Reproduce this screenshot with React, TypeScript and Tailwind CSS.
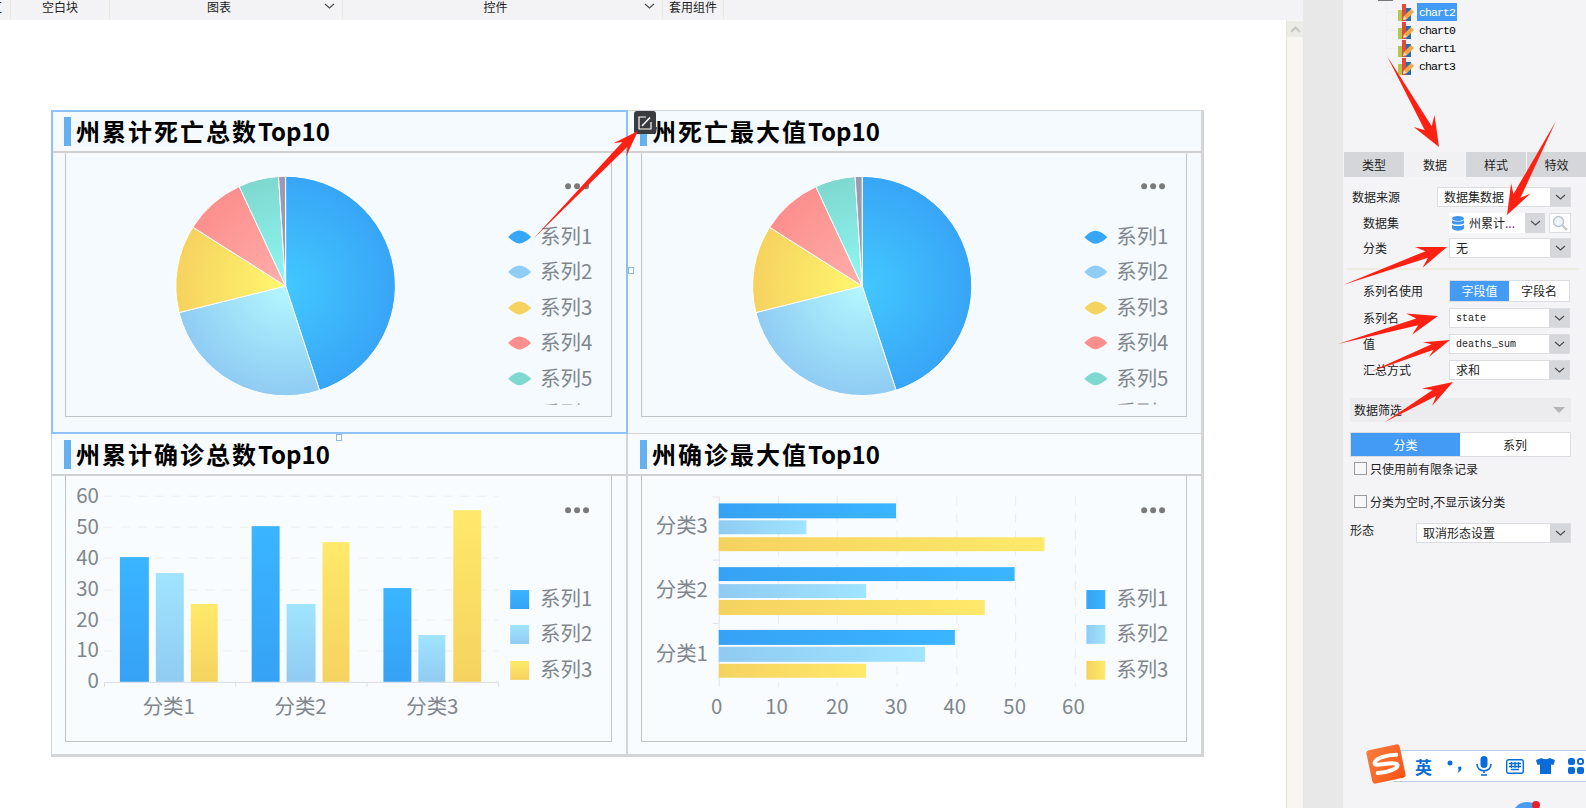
const legendItems = ["系列1", "系列2", "系列3", "系列4", "系列5", "系列6"];
const legendFills = ["#38a6f7", "#8fcdf4", "#f6d25f", "#fc8f8d", "#7ed8d0", "#9a9ab5"];

function Defs() {
  return (
    <defs>
      <radialGradient id="r1" gradientUnits="userSpaceOnUse" cx="286" cy="286" r="110">
        <stop offset="0" stopColor="#42c8ff" />
        <stop offset="1" stopColor="#38a5f6" />
      </radialGradient>
      <radialGradient id="r2" gradientUnits="userSpaceOnUse" cx="286" cy="286" r="110">
        <stop offset="0" stopColor="#b4f8ff" />
        <stop offset="1" stopColor="#8fcbf3" />
      </radialGradient>
      <radialGradient id="r3" gradientUnits="userSpaceOnUse" cx="286" cy="286" r="110">
        <stop offset="0" stopColor="#fff76e" />
        <stop offset="1" stopColor="#f6d25f" />
      </radialGradient>
      <radialGradient id="r4" gradientUnits="userSpaceOnUse" cx="286" cy="286" r="110">
        <stop offset="0" stopColor="#ffaeab" />
        <stop offset="1" stopColor="#fc8f8d" />
      </radialGradient>
      <radialGradient id="r5" gradientUnits="userSpaceOnUse" cx="286" cy="286" r="110">
        <stop offset="0" stopColor="#90f7f3" />
        <stop offset="1" stopColor="#7ed8d0" />
      </radialGradient>
      <linearGradient id="v1" x1="0" y1="0" x2="0" y2="1">
        <stop offset="0" stopColor="#3ab5ff" />
        <stop offset="1" stopColor="#36a2f5" />
      </linearGradient>
      <linearGradient id="v2" x1="0" y1="0" x2="0" y2="1">
        <stop offset="0" stopColor="#a0e4ff" />
        <stop offset="1" stopColor="#90cbf2" />
      </linearGradient>
      <linearGradient id="v3" x1="0" y1="0" x2="0" y2="1">
        <stop offset="0" stopColor="#ffe96a" />
        <stop offset="1" stopColor="#f5d25f" />
      </linearGradient>
      <linearGradient id="h1" x1="0" y1="0" x2="1" y2="0">
        <stop offset="0" stopColor="#36a2f5" />
        <stop offset="1" stopColor="#3ab5ff" />
      </linearGradient>
      <linearGradient id="h2" x1="0" y1="0" x2="1" y2="0">
        <stop offset="0" stopColor="#90cbf2" />
        <stop offset="1" stopColor="#a0e4ff" />
      </linearGradient>
      <linearGradient id="h3" x1="0" y1="0" x2="1" y2="0">
        <stop offset="0" stopColor="#f5d25f" />
        <stop offset="1" stopColor="#ffe96a" />
      </linearGradient>
      <clipPath id="legendClip">
        <rect x="500" y="215" width="110" height="190" />
      </clipPath>
    </defs>
  );
}

function Dots({ x, y }: { x: number; y: number }) {
  return (
    <g fill="#7a7a7a">
      <circle cx={x} cy={y} r="3" />
      <circle cx={x + 9} cy={y} r="3" />
      <circle cx={x + 18} cy={y} r="3" />
    </g>
  );
}

function Label({ x, y, anchor, children }: { x: number; y: number; anchor?: "middle" | "end"; children: string }) {
  return (
    <text x={x} y={y + 7} textAnchor={anchor} fontSize="20.5" fill="#7f868d">
      {children}
    </text>
  );
}

function slice(from: number, to: number) {
  const cx = 286;
  const cy = 286;
  const r = 110;
  const a = (from * Math.PI) / 180;
  const b = (to * Math.PI) / 180;
  const large = to - from > 180 ? 1 : 0;
  return `M${cx} ${cy}L${cx + r * Math.sin(a)} ${cy - r * Math.cos(a)}A${r} ${r} 0 ${large} 1 ${cx + r * Math.sin(b)} ${cy - r * Math.cos(b)}Z`;
}

function PieChart({ viewBox }: { viewBox: string }) {
  const slices = [
    [0, 162, "url(#r1)"],
    [162, 256, "url(#r2)"],
    [256, 302.4, "url(#r3)"],
    [302.4, 335, "url(#r4)"],
    [335, 356.3, "url(#r5)"],
    [356.3, 360, "#9a9ab5"],
  ] as const;
  const rows = [237, 272, 308, 343, 379, 414];
  return (
    <svg viewBox={viewBox} className="h-full w-full">
      <Defs />
      {slices.map((s, i) => (
        <path key={i} d={slice(s[0], s[1])} fill={s[2]} stroke="#ffffff" strokeWidth="1" />
      ))}
      <Dots x={569} y={186} />
      <g clipPath="url(#legendClip)">
        {rows.map((y, i) => (
          <g key={i}>
            <path
              d={`M509 ${y}Q515 ${y - 6} 520 ${y - 6.5}Q526 ${y - 6} 532 ${y}Q526 ${y + 6} 520 ${y + 6.5}Q515 ${y + 6} 509 ${y}Z`}
              fill={legendFills[i]}
            />
            <Label x={541} y={y}>
              {legendItems[i]}
            </Label>
          </g>
        ))}
      </g>
    </svg>
  );
}

function BarChart() {
  const grid = [496, 527, 558, 590, 620, 651];
  const ticks = [
    ["60", 496],
    ["50", 527],
    ["40", 558],
    ["30", 589],
    ["20", 620],
    ["10", 650],
    ["0", 681],
  ] as const;
  const bars = [
    [120, 29, 557, 1],
    [156, 28, 573, 2],
    [191, 27, 604, 3],
    [252, 28, 526, 1],
    [287, 29, 604, 2],
    [323, 27, 542, 3],
    [384, 28, 588, 1],
    [419, 27, 635, 2],
    [454, 28, 510, 3],
  ];
  return (
    <svg viewBox="66 476 546 265" className="h-full w-full">
      <Defs />
      {grid.map((y) => (
        <line key={y} x1="104" x2="499" y1={y} y2={y} stroke="#eceef1" strokeDasharray="9 8" />
      ))}
      {ticks.map(([t, y]) => (
        <Label key={t} x={99} y={y} anchor="end">
          {t}
        </Label>
      ))}
      {bars.map(([x, w, top, s]) => (
        <rect key={x} x={x} y={top} width={w} height={682 - top} fill={`url(#v${s})`} />
      ))}
      <path d="M104.5 687V682.5H499.5V687M236 682.5V687M367.5 682.5V687" fill="none" stroke="#d9dbe2" />
      <Label x={169} y={707} anchor="middle">分类1</Label>
      <Label x={301} y={707} anchor="middle">分类2</Label>
      <Label x={433} y={707} anchor="middle">分类3</Label>
      <Dots x={569} y={510} />
      {[599, 634, 670].map((y, i) => (
        <g key={y}>
          <rect x="511" y={y - 9} width="19" height="19" fill={`url(#v${i + 1})`} />
          <Label x={541} y={y}>{legendItems[i]}</Label>
        </g>
      ))}
    </svg>
  );
}

function HBarChart() {
  const gridX = [778, 837, 897, 957, 1016, 1076];
  const xTicks = [
    ["0", 716],
    ["10", 776],
    ["20", 837],
    ["30", 896],
    ["40", 955],
    ["50", 1015],
    ["60", 1074],
  ] as const;
  const bars = [
    [503, 15, 896, 1],
    [520, 14, 806, 2],
    [537, 14, 1045, 3],
    [567, 14, 1015, 1],
    [584, 14, 866, 2],
    [600, 15, 985, 3],
    [630, 15, 955, 1],
    [647, 15, 925, 2],
    [664, 14, 866, 3],
  ];
  return (
    <svg viewBox="641 476 546 265" className="h-full w-full">
      <Defs />
      {gridX.map((x) => (
        <line key={x} x1={x} x2={x} y1="496" y2="687" stroke="#e9ebee" strokeDasharray="9 8" />
      ))}
      <path d="M712 496.500H718M712 560H718M712 623.500H718M718.500 496V687" fill="none" stroke="#e1e3e8" />
      {bars.map(([y, h, end, s]) => (
        <rect key={y} x="718" y={y} width={end - 718} height={h} fill={`url(#h${s})`} />
      ))}
      <Label x={681} y={526} anchor="middle">分类3</Label>
      <Label x={681} y={590} anchor="middle">分类2</Label>
      <Label x={681} y={654} anchor="middle">分类1</Label>
      {xTicks.map(([t, x]) => (
        <Label key={t} x={x} y={707} anchor="middle">
          {t}
        </Label>
      ))}
      <Dots x={1145} y={510} />
      {[599, 634, 670].map((y, i) => (
        <g key={y}>
          <rect x="1087" y={y - 9} width="19" height="19" fill={`url(#h${i + 1})`} />
          <Label x={1117} y={y}>{legendItems[i]}</Label>
        </g>
      ))}
    </svg>
  );
}

function Cell({
  title,
  suffix,
  children,
  className,
  boxHeight,
}: {
  title: string;
  suffix: string;
  children: React.ReactNode;
  className: string;
  boxHeight: string;
}) {
  return (
    <div className={`border-[#d2d4d6] ${className}`}>
      <div className="flex h-[42px] items-center gap-[5px] border-b-2 border-[#d0d0d0] pl-[12px]">
        <div className="h-[29px] w-[7px] bg-[#65b1f0]" />
        <div className="text-[24px] leading-none font-bold text-black">
          <span className="tracking-[2px]">{title}</span>
          {suffix}
        </div>
      </div>
      <div className={`mr-[14px] ml-[13px] border border-t-0 border-[#c0c4c8] ${boxHeight}`}>{children}</div>
    </div>
  );
}

function Chevron() {
  return (
    <svg width="11" height="6" viewBox="0 0 11 6" fill="none" stroke="#4a4a4a" strokeWidth="1.1">
      <path d="M1 1l4.500 4 4.500-4" />
    </svg>
  );
}

function Select({ text, width, mono }: { text: string; width: string; mono?: boolean }) {
  return (
    <div className={`flex h-[20px] border border-[#dcdde1] bg-white ${width}`}>
      <div
        className={`flex flex-1 items-center pl-[6px] text-[#222] ${
          mono ? "font-['Liberation_Mono',monospace] text-[10px]" : "text-[12px]"
        }`}
      >
        {text}
      </div>
      <div className="flex w-[20px] items-center justify-center bg-[#d6d7db]">
        <Chevron />
      </div>
    </div>
  );
}

function Row({
  label,
  indent,
  children,
  className,
  labelClass,
}: {
  label: string;
  indent: string;
  children: React.ReactNode;
  className: string;
  labelClass?: string;
}) {
  return (
    <div className={`flex items-center justify-between ${indent} ${className}`}>
      <span className={labelClass}>{label}</span>
      {children}
    </div>
  );
}

function ChartIcon() {
  return (
    <svg width="17" height="18" viewBox="0 0 17 18">
      <rect x="0" y="7" width="4" height="11" fill="#b4c84f" />
      <rect x="4" y="1" width="4" height="17" fill="#e8473c" />
      <rect x="8" y="5" width="5" height="13" fill="#1f6fb2" />
      <path d="M5 17l1-4 7-7 3 3-7 7z" fill="#f4a640" />
      <path d="M5 17l1-4 3 3z" fill="#f7dfb0" />
    </svg>
  );
}

function TreeRow({ name, active }: { name: string; active?: boolean }) {
  return (
    <div className="flex h-[18px] items-center">
      <div className="h-px w-[11px] bg-[#efeff1]" />
      <ChartIcon />
      <div
        className={`ml-[2px] flex h-[18px] w-[40px] items-center justify-center pt-[2px] font-['Liberation_Mono',monospace] text-[11.5px] tracking-[-0.9px] ${
          active ? "bg-[#439bf6] text-white" : "text-black"
        }`}
      >
        {name}
      </div>
    </div>
  );
}

function Checkbox({ label, className }: { label: string; className: string }) {
  return (
    <div className={`flex h-[13px] items-center gap-[3px] pl-[11px] ${className}`}>
      <div className="h-[13px] w-[13px] border border-[#9b9b9b] bg-[#f7f7f9]" />
      <span>{label}</span>
    </div>
  );
}

function ImeBar() {
  return (
    <div className="absolute top-[750px] left-[50px] flex h-[32px] w-[193px] items-center border-y border-[#b9cfe8] bg-white pl-[22px] text-[#0a6cd6]">
      <div className="absolute top-[-4px] left-[-24px] flex h-[34px] w-[34px] -rotate-12 items-center justify-center rounded-[3px] bg-gradient-to-br from-[#f77c3c] to-[#f9520f]">
        <svg width="29" height="21" viewBox="0 0 29 21" fill="none" stroke="#ffffff" strokeWidth="4" strokeLinecap="round">
          <path d="M26 3C17 1 4 2 3 7c-1 4 20 1 22 6 1 4-12 6-21 4" />
        </svg>
      </div>
      <span className="w-[19px] text-[17px] leading-none font-bold">英</span>
      <svg width="20" height="14" viewBox="0 0 20 14" fill="#0a6cd6" className="ml-[12px]">
        <circle cx="4" cy="4" r="2.500" />
        <path d="M12 8.500c1-1.500 3.500-1.500 3.500.5 0 2-2 4-4 5 1-1.500 1.500-3 .5-5.500z" />
      </svg>
      <svg width="16" height="20" viewBox="0 0 16 20" className="ml-[10px]" fill="none" stroke="#0a6cd6" strokeWidth="1.600">
        <rect x="4.500" y="0" width="7" height="12" rx="3.500" fill="#0a6cd6" stroke="none" />
        <path d="M1 8c0 9 14 9 14 0M8 14v3" />
        <path d="M5 19h6" />
      </svg>
      <svg width="18" height="15" viewBox="0 0 18 15" className="ml-[14px]" fill="none" stroke="#0a6cd6" strokeWidth="1.400">
        <rect x=".7" y=".7" width="16.600" height="13.600" rx="2" />
        <path d="M3 4.500h12M3 7.500h12M5 10.500h8M5.500 3v6M9 3v6M12.500 3v6" strokeWidth="1.300" />
      </svg>
      <svg width="19" height="16" viewBox="0 0 19 16" className="ml-[12px]" fill="#0a6cd6">
        <path d="M5.500 0c1 1.500 7 1.500 8 0l5.500 2-1.500 5-2.500-.5V16H4V6.500L1.500 7 0 2z" />
      </svg>
      <svg width="16" height="16" viewBox="0 0 16 16" className="ml-[13px]" fill="#0a6cd6">
        <rect x="0" y="0" width="7" height="7" rx="2.500" />
        <rect x="10" y="1" width="5" height="5" rx="2" fill="none" stroke="#0a6cd6" strokeWidth="2" />
        <rect x="0" y="9" width="7" height="7" rx="2" />
        <rect x="9" y="9" width="7" height="7" rx="2" />
      </svg>
    </div>
  );
}

function arrow(t: number[], p: number[], len = 30, barb = 11, neck = 3.500) {
  const dx = p[0] - t[0];
  const dy = p[1] - t[1];
  const d = Math.hypot(dx, dy);
  const ux = dx / d;
  const uy = dy / d;
  const nx = -uy;
  const ny = ux;
  const at = (back: number, side: number) => `${p[0] - ux * back + nx * side},${p[1] - uy * back + ny * side}`;
  return [
    `${t[0]},${t[1]}`,
    at(len * 0.72, neck),
    at(len, barb),
    `${p[0]},${p[1]}`,
    at(len, -barb),
    at(len * 0.72, -neck),
  ].join(" ");
}

const arrows = [
  [[533, 239], [638, 131], 26, 9, 3.500],
  [[1387, 56], [1439, 147], 30, 12, 4],
  [[1556, 121], [1507, 215], 30, 11, 4],
  [[1343, 285], [1447, 247], 30, 11, 3.500],
  [[1338, 344], [1438, 316], 30, 11, 3.500],
  [[1370, 372], [1450, 340], 26, 8, 3],
  [[1385, 422], [1453, 382], 30, 10, 3.500],
] as const;

export default function App() {
  return (
    <div className="relative flex h-[808px] w-[1586px] overflow-hidden bg-white font-['Noto_Sans_CJK_SC',sans-serif] text-[12px] text-[#222]">
      <div className="flex w-[1303px] flex-col">
        <div className="flex h-[20px] items-start bg-[#f3f3f5] leading-[13px]">
          <div className="flex h-[19px] w-[11px] justify-end overflow-hidden border-r border-[#e9e8dd]">
            <span className="mr-[8px] shrink-0">区</span>
          </div>
          <div className="flex h-[19px] w-[99px] justify-center border-r border-[#e9e8dd]">空白块</div>
          <div className="relative flex h-[19px] w-[233px] justify-center border-r border-[#e9e8dd] pr-[14px]">
            图表
            <div className="absolute top-[3px] right-[7px]">
              <Chevron />
            </div>
          </div>
          <div className="relative flex h-[19px] w-[320px] justify-center border-r border-[#e9e8dd] pr-[14px]">
            控件
            <div className="absolute top-[3px] right-[7px]">
              <Chevron />
            </div>
          </div>
          <div className="flex h-[19px] w-[61px] justify-center border-r border-[#e9e8dd]">套用组件</div>
        </div>
        <div className="flex flex-1">
          <div className="flex-1 pt-[90px] pl-[51px]">
            <div className="grid w-[1153px] grid-cols-[576px_577px] grid-rows-[323px_324px]">
              <Cell title="州累计死亡总数" suffix="Top10" className="border-t border-r border-l bg-[#f5fafe]" boxHeight="h-[264px]">
                <PieChart viewBox="66 153 546 263" />
              </Cell>
              <Cell title="州死亡最大值" suffix="Top10" className="border-t border-r-[3px] border-l bg-[#f5fafe]" boxHeight="h-[264px]">
                <PieChart viewBox="65 153 546 263" />
              </Cell>
              <Cell title="州累计确诊总数" suffix="Top10" className="border-t border-r border-b-[3px] border-l bg-[#f9fcff]" boxHeight="h-[266px]">
                <BarChart />
              </Cell>
              <Cell title="州确诊最大值" suffix="Top10" className="border-t border-r-[3px] border-b-[3px] border-l bg-[#f9fcff]" boxHeight="h-[266px]">
                <HBarChart />
              </Cell>
            </div>
          </div>
          <div className="w-[17px] border-l border-[#e8e4d8] bg-[#f7f6f2]">
            <div className="mt-px flex h-[16px] items-center justify-center bg-[#ebebe7]">
              <svg width="11" height="7" viewBox="0 0 11 7" fill="none" stroke="#c8c8c8" strokeWidth="2">
                <path d="M1 6l4.500-4.500L10 6" />
              </svg>
            </div>
          </div>
        </div>
      </div>

      <div className="w-[40px] bg-[#e8e8e8]" />

      <div className="relative w-[243px] bg-[#f4f4f7]">
        <div className="absolute top-0 left-[35px] h-px w-[15px] bg-[#777]" />
        <div className="h-[152px] pt-[3px] pl-[43px]">
          <div className="flex w-fit flex-col border-l border-[#efeff1]">
            <TreeRow name="chart2" active />
            <TreeRow name="chart0" />
            <TreeRow name="chart1" />
            <TreeRow name="chart3" />
          </div>
        </div>

        <div className="flex h-[25px] gap-px pl-px">
          <div className="flex w-[60px] items-center justify-center bg-[#d5d6da]">类型</div>
          <div className="flex w-[60px] items-center justify-center bg-[#f1f1f4]">数据</div>
          <div className="flex w-[60px] items-center justify-center bg-[#d5d6da]">样式</div>
          <div className="flex w-[59px] items-center justify-center bg-[#d5d6da]">特效</div>
        </div>

        <Row label="数据来源" indent="pl-[9px]" className="mt-[10px] pr-[15px]">
          <Select text="数据集数据" width="w-[134px]" />
        </Row>
        <Row label="数据集" indent="pl-[20px]" className="mt-[6px] pr-[15px]">
          <div className="flex gap-[4px]">
            <div className="flex h-[20px] w-[96px] bg-white">
              <div className="flex flex-1 items-center gap-[5px] pl-[3px]">
                <svg width="12" height="15" viewBox="0 0 12 15" fill="#3d95ee">
                  <ellipse cx="6" cy="2.500" rx="6" ry="2.500" />
                  <path d="M0 4c1 2 11 2 12 0v3c-1 2-11 2-12 0zM0 8.500c1 2 11 2 12 0V12c-1 3.500-11 3.500-12 0z" />
                </svg>
                <span>州累计<span className="text-[#7a2a7a]">...</span></span>
              </div>
              <div className="flex w-[20px] items-center justify-center bg-[#d6d7db]">
                <Chevron />
              </div>
            </div>
            <div className="flex h-[20px] w-[22px] items-center justify-center border border-[#dcdde1] bg-white">
              <svg width="16" height="16" viewBox="0 0 16 16" fill="none">
                <circle cx="6.500" cy="6.500" r="5" fill="#eef5fb" stroke="#b7c4cf" strokeWidth="1.400" />
                <path d="M10.500 10.500L15 15" stroke="#c3c3c3" strokeWidth="2.200" />
              </svg>
            </div>
          </div>
        </Row>
        <Row label="分类" indent="pl-[20px]" className="mt-[5px] pr-[15px]">
          <Select text="无" width="w-[122px]" />
        </Row>

        <div className="mt-[10px] mr-[7px] ml-[4px] h-[2px] bg-[#eeece2]" />

        <Row label="系列名使用" indent="pl-[20px]" className="mt-[10px] pr-[16px]">
          <div className="flex h-[22px] w-[121px] border border-[#dcdde1] bg-white">
            <div className="flex w-[59px] items-center justify-center bg-[#439bf6] text-white">字段值</div>
            <div className="flex flex-1 items-center justify-center">字段名</div>
          </div>
        </Row>
        <Row label="系列名" indent="pl-[20px]" className="mt-[6px] pr-[16px]">
          <Select text="state" width="w-[121px]" mono />
        </Row>
        <Row label="值" indent="pl-[20px]" className="mt-[6px] pr-[16px]">
          <Select text="deaths_sum" width="w-[121px]" mono />
        </Row>
        <Row label="汇总方式" indent="pl-[20px]" className="mt-[6px] pr-[16px]">
          <Select text="求和" width="w-[121px]" />
        </Row>

        <div className="mt-[18px] mr-[15px] ml-[7px] flex h-[24px] items-center justify-between bg-[#ececee] pr-[6px] pl-[4px]">
          <span>数据筛选</span>
          <div className="h-0 w-0 border-x-[6px] border-t-[6px] border-x-transparent border-t-[#b5b5b5]" />
        </div>

        <div className="mt-[10px] mr-[15px] ml-[7px] flex h-[25px] border border-[#dcdde1] bg-white">
          <div className="flex w-[109px] items-center justify-center bg-[#439bf6] text-white">分类</div>
          <div className="flex flex-1 items-center justify-center">系列</div>
        </div>

        <Checkbox label="只使用前有限条记录" className="mt-[5px]" />
        <Checkbox label="分类为空时,不显示该分类" className="mt-[20px]" />

        <Row label="形态" indent="pl-[7px]" className="mt-[15px] pr-[15px]" labelClass="-mt-[6px]">
          <Select text="取消形态设置" width="w-[155px]" />
        </Row>

        <ImeBar />
        <div className="absolute top-[802px] left-[169px] h-[30px] w-[30px] rounded-full bg-[#4a9cf5]" />
        <div className="absolute top-[801px] left-[189px] h-[8px] w-[8px] rounded-full bg-[#e8202a]" />
      </div>

      {/* selection frame on chart2 */}
      <div className="pointer-events-none absolute top-[110px] left-[51px] h-[324px] w-[577px] border-2 border-[#8fc3f7]" />
      <div className="absolute top-[267px] left-[628px] h-[7px] w-[6px] border border-[#8fb8e0] bg-white" />
      <div className="absolute top-[434px] left-[336px] h-[7px] w-[6px] border border-[#8fb8e0] bg-white" />
      <div className="absolute top-[111px] left-[634px] flex h-[23px] w-[22px] items-center justify-center rounded-[3px] bg-[#3a3b3e]">
        <svg width="14" height="14" viewBox="0 0 14 14" fill="none" stroke="#ffffff" strokeWidth="1.200">
          <path d="M8 1H1v12h12V6" />
          <path d="M4 10L12 1.500" strokeWidth="1.500" />
        </svg>
      </div>

      {/* red annotation arrows */}
      <svg className="pointer-events-none absolute top-0 left-0" width="1586" height="808" viewBox="0 0 1586 808" fill="#fd2114">
        {arrows.map((a, i) => (
          <polygon key={i} points={arrow([...a[0]], [...a[1]], a[2], a[3], a[4])} />
        ))}
      </svg>
    </div>
  );
}
